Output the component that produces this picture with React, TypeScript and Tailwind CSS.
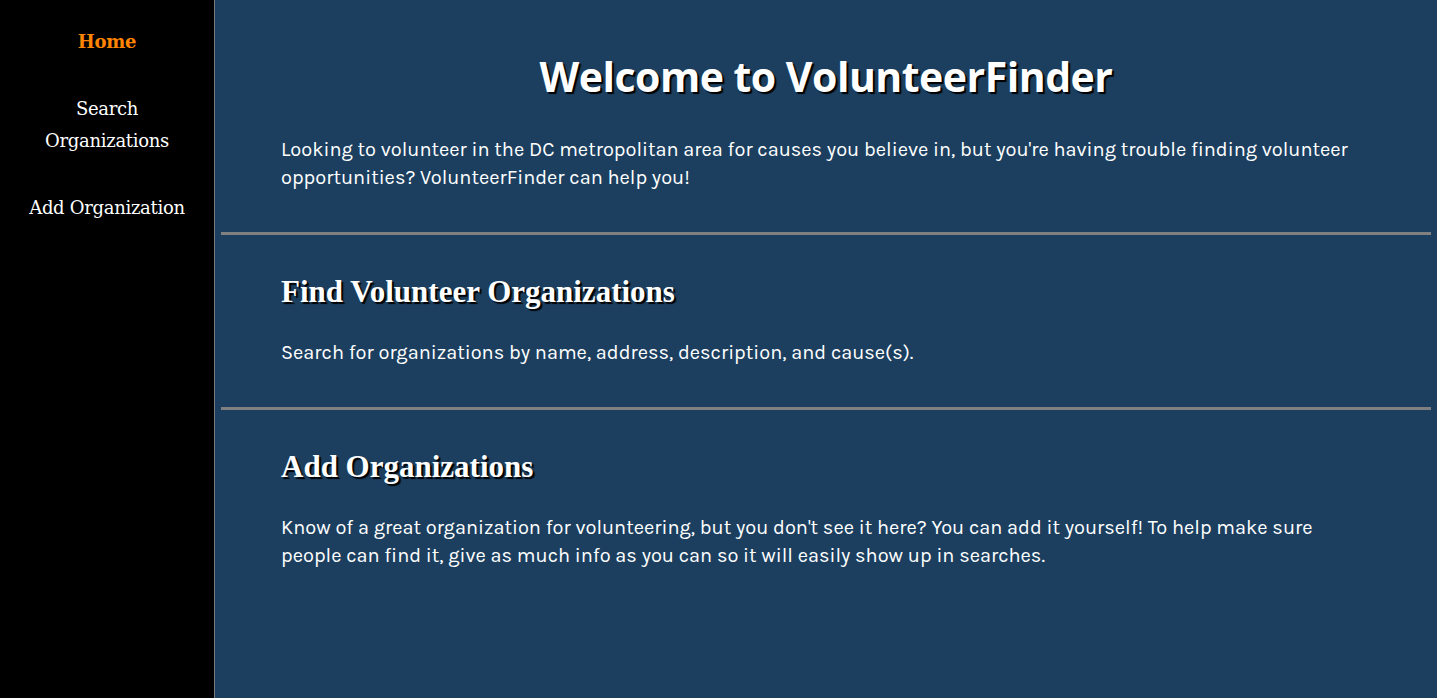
const navItems = [
  { label: 'Home', active: true },
  { label: 'Search Organizations', active: false },
  { label: 'Add Organization', active: false },
]

const serif = "font-['Liberation_Serif',serif]"
const navSerif = "font-['DejaVu_Serif',serif]"
const body = "font-['Karla','Lato','Open_Sans',sans-serif]"

export default function App() {
  return (
    <div className="flex min-h-screen h-[698px] bg-black">
      <nav className={`w-[215px] shrink-0 bg-black border-r border-[#7a7a7a] ${navSerif}`}>
        <ul className="flex flex-col items-center pt-[26px] gap-[35px]">
          {navItems.map(item => (
            <li key={item.label} className="w-[170px] text-center">
              <a
                href="#"
                className={`text-[18px] leading-[32px] tracking-[-0.3px] ${
                  item.active ? 'text-[#ff8400] font-bold' : 'text-white'
                }`}
              >
                {item.label}
              </a>
            </li>
          ))}
        </ul>
      </nav>

      <main className={`flex-1 bg-[#1c3f5f] px-[6px] text-white ${body}`}>
        <section className="px-[60px] pt-[52px] pb-[40px]">
          <h1 className="text-center text-[41px] leading-[48px] font-bold font-['Open_Sans',sans-serif] [text-shadow:2px_2px_1px_#000] tracking-[-0.5px]">
            Welcome to VolunteerFinder
          </h1>
          <p className="mt-[36px] text-[20px] leading-[28px]">
            Looking to volunteer in the DC metropolitan area for causes you believe in, but you're having trouble finding volunteer opportunities? VolunteerFinder can help you!
          </p>
        </section>

        <hr className="border-t-[3px] border-[#808080]" />

        <section className="px-[60px] pt-[39px] pb-[40px]">
          <h2 className={`${serif} text-[31px] leading-[36px] font-bold [text-shadow:2px_2px_1px_#000]`}>
            Find Volunteer Organizations
          </h2>
          <p className="mt-[29px] text-[20px] leading-[28px]">
            Search for organizations by name, address, description, and cause(s).
          </p>
        </section>

        <hr className="border-t-[3px] border-[#808080]" />

        <section className="px-[60px] pt-[39px] pb-[40px]">
          <h2 className={`${serif} text-[31px] leading-[36px] font-bold [text-shadow:2px_2px_1px_#000]`}>
            Add Organizations
          </h2>
          <p className="mt-[29px] text-[20px] leading-[28px]">
            Know of a great organization for volunteering, but you don't see it here? You can add it yourself! To help make sure people can find it, give as much info as you can so it will easily show up in searches.
          </p>
        </section>
      </main>
    </div>
  )
}
